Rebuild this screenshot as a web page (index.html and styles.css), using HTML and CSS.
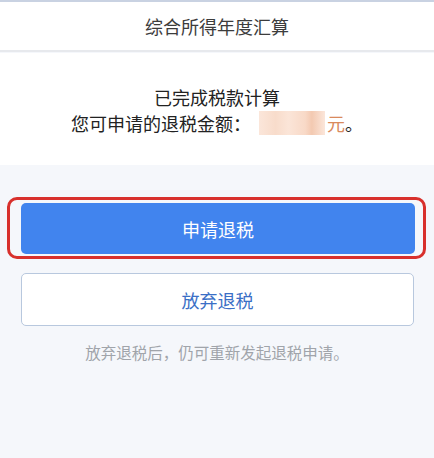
FILE: index.html
```html
<!DOCTYPE html>
<html lang="zh-CN">
<head>
<meta charset="utf-8">
<title>综合所得年度汇算</title>
<link rel="stylesheet" href="styles.css">
</head>
<body>
<header class="topbar">
  <h1 class="title">综合所得年度汇算</h1>
</header>
<section class="card">
  <p class="line">已完成税款计算</p>
  <p class="line">您可申请的退税金额：<span class="amount"><span class="blur"></span><span class="yuan">元</span></span>。</p>
</section>
<main class="actions">
  <div class="highlight">
    <button class="btn primary">申请退税</button>
  </div>
  <button class="btn outline">放弃退税</button>
  <p class="note">放弃退税后，仍可重新发起退税申请。</p>
</main>
</body>
</html>
```

FILE: styles.css
```css
html, body {
  margin: 0;
  padding: 0;
}
body {
  background: #f5f7fb;
  font-family: "Noto Sans CJK SC", "Noto Sans", sans-serif;
  width: 434px;
  height: 458px;
  overflow: hidden;
}
.topbar {
  background: #ffffff;
  border-top: 2px solid #c9d2e2;
  border-bottom: 2px solid #e7e9ed;
  height: 48px;
  display: flex;
  align-items: center;
  justify-content: center;
  margin-bottom: 1px;
}
.title {
  margin: 0;
  font-size: 18px;
  font-weight: 400;
  color: #3c3c3c;
  line-height: 24px;
}
.card {
  background: #ffffff;
  height: 112px;
  box-sizing: border-box;
  padding-top: 31px;
  text-align: center;
}
.line {
  margin: 0;
  font-size: 18px;
  line-height: 26px;
  color: #222222;
}
.amount {
  display: inline-flex;
  align-items: center;
  vertical-align: top;
  height: 26px;
  margin-left: 8px;
}
.blur {
  display: inline-block;
  width: 66px;
  height: 24px;
  background: linear-gradient(90deg, #fbe6da 0%, #f8dccb 25%, #fbe5d8 45%, #f8d9c7 70%, #f3c9b1 80%, #fbe6da 100%);
}
.yuan {
  color: #d98a5c;
  margin-left: 2px;
}
.actions {
  padding-top: 32px;
  display: flex;
  flex-direction: column;
}
.highlight {
  border: 3px solid #d8302c;
  border-radius: 10px;
  margin: 0 8px 0 7px;
  padding: 3px 8px 2px 11px;
  background: #f5f7fb;
}
.btn {
  font-family: "Noto Sans CJK SC", "Noto Sans", sans-serif;
  font-size: 18px;
  border-radius: 5px;
  display: flex;
  align-items: center;
  justify-content: center;
  box-sizing: border-box;
  cursor: pointer;
}
.primary {
  width: 100%;
  height: 51px;
  background: #4184ee;
  color: #ffffff;
  border: none;
}
.outline {
  margin: 14px 20px 0 21px;
  height: 53px;
  background: #ffffff;
  color: #3b6fc6;
  border: 1px solid #b8c8de;
}
.note {
  margin: 16px 0 0;
  text-align: center;
  font-size: 15.5px;
  line-height: 20px;
  color: #a0a4aa;
}
```
